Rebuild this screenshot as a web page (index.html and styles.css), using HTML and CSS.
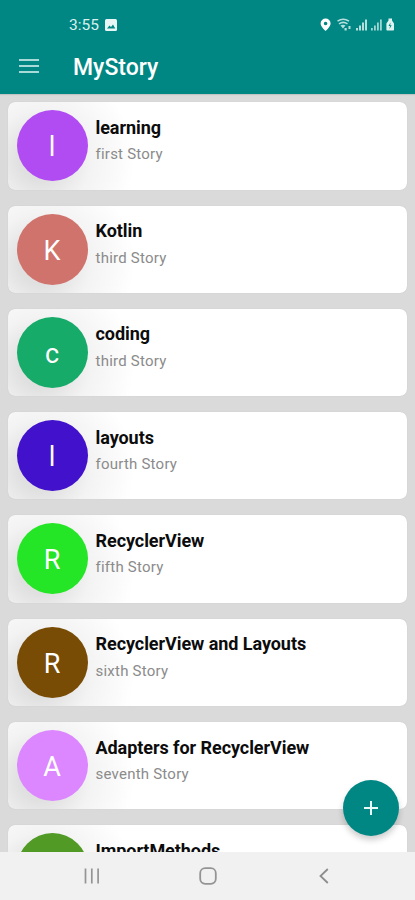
FILE: index.html
```html
<!DOCTYPE html>
<html lang="en">
<head>
    <meta charset="UTF-8">
    <meta name="viewport" content="width=device-width, initial-scale=1.0">
    <title>MyStory</title>
    <link rel="stylesheet" href="styles.css">
</head>
<body>
    <div class="screen">
        <header>
            <div class="status-bar">
                <div class="status-left">
                    <span class="time">3:55</span>
                    <svg class="picture-icon" width="12" height="12" viewBox="0 0 12 12">
                        <rect width="12" height="12" rx="1.5" fill="#e8f7f5"/>
                        <path d="M2 9.5 4.5 6.5 6 8 8 5.5 10.3 9.5Z" fill="#008784"/>
                    </svg>
                </div>
                <svg class="status-icons" width="76" height="14" viewBox="0 0 76 14">
                    <path fill="#fff" fill-rule="evenodd" d="M5.6.5A5 5 0 0 0 .6 5.500C.6 8.500 5.600 13 5.600 13s5-4.500 5-7.500a5 5 0 0 0-5-5Zm0 3.200a1.800 1.800 0 1 1 0 3.600 1.800 1.800 0 0 1 0-3.600Z"/>
                    <g fill="none" stroke="#b5dfdc" stroke-width="1.500">
                        <path d="M17.500 3.200c3.500-2.400 8-2.400 11.500 0M19 5.800c2.700-1.800 5.800-1.800 8.500 0"/>
                    </g>
                    <path fill="#b5dfdc" d="M20.500 7.500c1.700-1 3.300-1 5 0l-2.500 3Z"/>
                    <path fill="#b5dfdc" d="M24.500 10h2.200v2.500h-2.200zM28.500 8h2v3h-2z"/>
                    <path fill="#b5dfdc" d="M36 10h2v2.500h-2zM39 7.500h2v5h-2zM42 4.500h2v8h-2zM45 1.500h2v11h-2z"/>
                    <path fill="#9fd5d2" d="M51 10h1.800v2.500H51zM54 7.500h1.800v5H54zM57 4.500h1.800v8H57zM60 1.500h1.800v11H60z"/>
                    <path fill="#e0f3f1" d="M68.500.5h3.500v2l2 3v6c0 .6-.4 1-1 1h-5.600c-.6 0-1-.4-1-1v-6l2.100-3z"/>
                    <path fill="#008784" d="m70.500 4.500-2 3.500h1.500l-.5 3 2.200-3.700h-1.500z"/>
                </svg>
            </div>
            <div class="toolbar">
                <svg class="menu-icon" width="20" height="14" viewBox="0 0 20 14">
                    <path d="M0 1h20M0 7h20M0 13h20" stroke="#a8dbd7" stroke-width="2"/>
                </svg>
                <h1>MyStory</h1>
            </div>
        </header>

        <main class="story-list">
            <div class="story-card">
                <div class="avatar purple">l</div>
                <div class="story-text">
                    <h2>learning</h2>
                    <p>first Story</p>
                </div>
            </div>
            <div class="story-card">
                <div class="avatar coral">K</div>
                <div class="story-text">
                    <h2>Kotlin</h2>
                    <p>third Story</p>
                </div>
            </div>
            <div class="story-card">
                <div class="avatar green">c</div>
                <div class="story-text">
                    <h2>coding</h2>
                    <p>third Story</p>
                </div>
            </div>
            <div class="story-card">
                <div class="avatar indigo">l</div>
                <div class="story-text">
                    <h2>layouts</h2>
                    <p>fourth Story</p>
                </div>
            </div>
            <div class="story-card">
                <div class="avatar lime">R</div>
                <div class="story-text">
                    <h2>RecyclerView</h2>
                    <p>fifth Story</p>
                </div>
            </div>
            <div class="story-card">
                <div class="avatar brown">R</div>
                <div class="story-text">
                    <h2>RecyclerView and Layouts</h2>
                    <p>sixth Story</p>
                </div>
            </div>
            <div class="story-card">
                <div class="avatar pink">A</div>
                <div class="story-text">
                    <h2>Adapters for RecyclerView</h2>
                    <p>seventh Story</p>
                </div>
            </div>
            <div class="story-card">
                <div class="avatar olive"></div>
                <div class="story-text">
                    <h2>ImportMethods</h2>
                </div>
            </div>
        </main>

        <button class="add-btn" aria-label="Add">
            <svg width="14" height="14" viewBox="0 0 14 14">
                <path d="M7 0v14M0 7h14" stroke="#e9fbf9" stroke-width="2"/>
            </svg>
        </button>

        <nav class="nav-bar">
            <svg width="16" height="16" viewBox="0 0 16 16">
                <path d="M1.500.5v15M7.800.5v15M14.100.5v15" stroke="#949494" stroke-width="1.700"/>
            </svg>
            <svg width="18" height="18" viewBox="0 0 18 18">
                <rect x="1.200" y="1.200" width="15.600" height="15.600" rx="5" fill="none" stroke="#949494" stroke-width="1.800"/>
            </svg>
            <svg width="10" height="16" viewBox="0 0 10 16">
                <path d="M8.800 1 1.500 8l7.300 7" fill="none" stroke="#8d8d8d" stroke-width="1.800"/>
            </svg>
        </nav>
    </div>
</body>
</html>
```

FILE: styles.css
```css
* {
    box-sizing: border-box;
}

body {
    font-family: Roboto, sans-serif;
    margin: 0;
    background: #dadada;
}

h1,
h2,
p {
    margin: 0;
}

svg {
    display: block;
}

.screen {
    position: relative;
    display: flex;
    flex-direction: column;
    width: 100%;
    height: 900px;
    overflow: hidden;
}

/* Header */
header {
    flex: none;
    height: 94px;
    background: #008784;
    color: #fff;
    box-shadow: 0 1px 1px rgba(0, 0, 0, 0.1);
}

.status-bar {
    display: flex;
    justify-content: space-between;
    align-items: center;
    height: 40px;
    padding: 9px 19px 0 69px;
}

.status-left {
    display: flex;
    align-items: center;
    gap: 6px;
}

.time {
    font-size: 15.500px;
    line-height: 20px;
    color: #d9f1ef;
}

.toolbar {
    display: flex;
    align-items: center;
    gap: 34px;
    height: 54px;
    padding-left: 19px;
}

.menu-icon {
    margin-bottom: 3px;
}

.toolbar h1 {
    padding-top: 2px;
    font-size: 23px;
    font-weight: 500;
    line-height: 28px;
}

/* Story list */
.story-list {
    flex: 1;
    min-height: 0;
    display: flex;
    flex-direction: column;
    gap: 16px;
    padding: 8.300px 8px 0;
    overflow: hidden;
}

.story-card {
    flex: none;
    display: flex;
    gap: 8px;
    height: 87.300px;
    padding: 8px 8.500px;
    border-radius: 7px;
    background: #fff radial-gradient(circle at 32px 58px, #e0e0e0 20px, #f3f3f3 50px, #fff 95px);
    box-shadow: 0 0 1px rgba(0, 0, 0, 0.15);
}

.avatar {
    flex: none;
    display: flex;
    justify-content: center;
    align-items: center;
    width: 71px;
    height: 71px;
    padding-top: 3px;
    border-radius: 50%;
    font-size: 27px;
    color: #fff;
}

.story-text h2 {
    margin-top: 6.500px;
    font-size: 18px;
    font-weight: 700;
    letter-spacing: -0.060px;
    line-height: 22px;
    color: #0c0c0c;
}

.story-text p {
    margin-top: 5.500px;
    font-size: 15px;
    letter-spacing: 0.230px;
    line-height: 20px;
    color: #8b8b8b;
}

.purple { background: #b14cf3; }
.coral { background: #d0736c; }
.green { background: #17ab6a; }
.indigo { background: #4211cb; }
.lime { background: #24e526; }
.brown { background: #784c05; }
.pink { background: #dc86ff; }
.olive { background: #509a25; }

/* Floating button */
.add-btn {
    position: absolute;
    right: 16px;
    bottom: 64.500px;
    display: flex;
    justify-content: center;
    align-items: center;
    width: 56px;
    height: 56px;
    padding: 0;
    border: none;
    border-radius: 50%;
    background: #008784;
    box-shadow: 0 4px 6px rgba(0, 0, 0, 0.2);
}

/* System navigation */
.nav-bar {
    flex: none;
    display: grid;
    grid-template-columns: 16px 18px 10px;
    column-gap: 98.500px;
    align-items: center;
    height: 48px;
    padding: 0 0 1px 84px;
    background: #f1f1f1;
}

.nav-bar svg:last-child {
    margin-left: 4px;
}
```
